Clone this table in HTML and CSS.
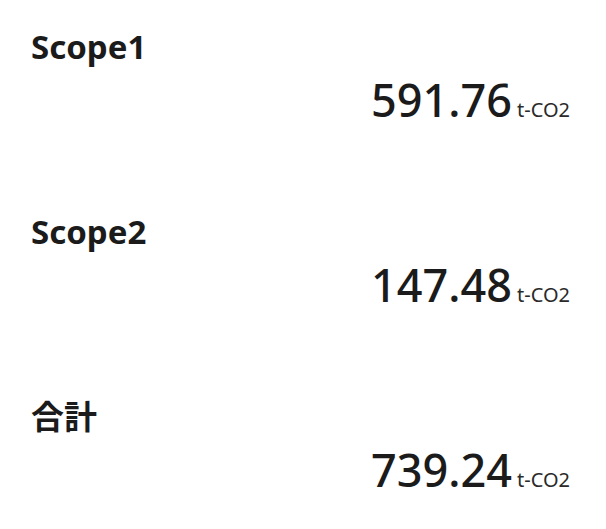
FILE: index.html
```html
<!DOCTYPE html>
<html lang="ja">
<head>
<meta charset="utf-8">
<link rel="stylesheet" href="styles.css">
</head>
<body>
<div class="list">
  <div class="item">
    <div class="label">Scope1</div>
    <div class="value"><span class="num">591.76</span><span class="unit">t-CO2</span></div>
  </div>
  <div class="item">
    <div class="label">Scope2</div>
    <div class="value"><span class="num">147.48</span><span class="unit">t-CO2</span></div>
  </div>
  <div class="item">
    <div class="label">合計</div>
    <div class="value"><span class="num">739.24</span><span class="unit">t-CO2</span></div>
  </div>
</div>
</body>
</html>
```

FILE: styles.css
```css
html, body {
  margin: 0;
  padding: 0;
  background: #ffffff;
}
body {
  font-family: "Noto Sans", "Noto Sans CJK JP", sans-serif;
  color: #1b1b1b;
}
.list {
  display: flex;
  flex-direction: column;
  gap: 84px;
  padding: 27px 36px 0 31px;
}
.label {
  font-size: 33px;
  font-weight: 700;
  line-height: 40px;
  height: 40px;
}
.value {
  margin-top: 5px;
  text-align: right;
  line-height: 56px;
  height: 56px;
}
.num {
  font-size: 45px;
  font-weight: 500;
}
.unit {
  font-size: 20px;
  margin-left: 5px;
  color: #2a2a2a;
}
```
